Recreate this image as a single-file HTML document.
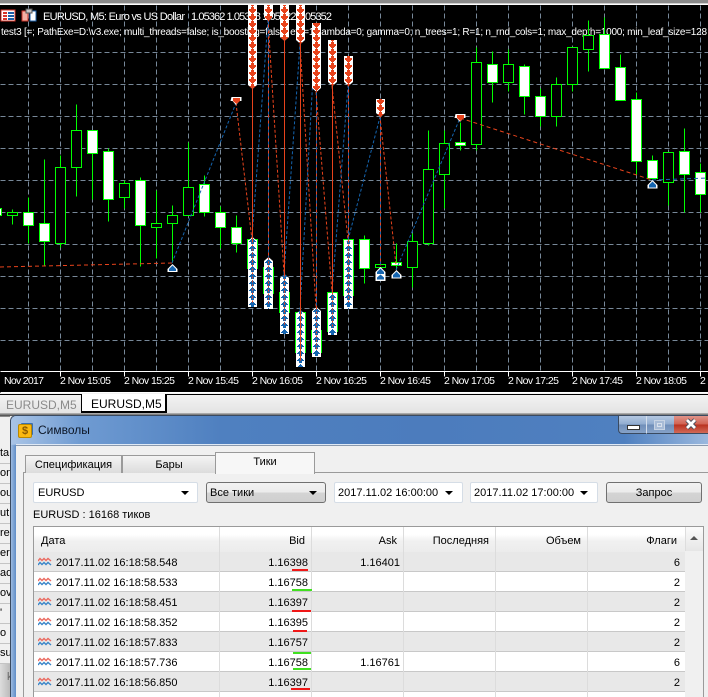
<!DOCTYPE html>
<html><head><meta charset="utf-8">
<style>
html,body{margin:0;padding:0;background:#f0f0f0}
body{position:relative;width:708px;height:697px;overflow:hidden;font:11px "Liberation Sans","Noto Sans CJK SC",sans-serif;color:#000}
.a{position:absolute;white-space:nowrap}
.c{position:absolute;top:482px;height:19px;background:#fff;border:1px solid #d5dde6;border-radius:2px;line-height:19px;font-size:11px}
.c span{position:absolute;left:3px;top:1px}
.c i{position:absolute;right:8px;top:8px;width:0;height:0;border:4px solid transparent;border-top:4px solid #000;border-bottom:0}
.g{background:linear-gradient(#f2f2f2 0,#ebebeb 50%,#d4d4d4 51%,#cfcfcf 100%);border:1px solid #707070}
.r{position:absolute;left:34px;width:651px;height:19px;border-bottom:1px solid #c8c8c8}
.r.o{background:#e8e8e8}.r.w{background:#fff}
.r b{font-weight:normal;position:absolute;top:4px;line-height:14px}
.r svg{position:absolute;left:4px;top:5px}
.r svg path{stroke-width:1.4}
.v{position:absolute;top:527px;width:1px;height:170px;background:#dcdcdc}
.h{position:absolute;top:535px;line-height:13px}
.u{position:absolute;height:2px}
.s{position:absolute;left:0;width:10px;height:19px;border-bottom:1px solid #c4c4c4;overflow:hidden;line-height:19px;background:#f0f0f0;font-size:11px}
.t{position:absolute;text-align:center;line-height:17px;font-size:11px}
</style></head><body>

<svg class="a" style="left:0;top:0" width="708" height="393" viewBox="0 0 708 393" font-family="Liberation Sans, sans-serif">
<defs>
<pattern id="rp" patternUnits="userSpaceOnUse" width="16" height="7"><g fill="#e8431c" shape-rendering="crispEdges"><rect x="11" y="0" width="3" height="2"/><rect x="9" y="2" width="7" height="2"/><rect x="10" y="4" width="5" height="1"/><rect x="11" y="5" width="3" height="1"/><rect x="12" y="6" width="1" height="1"/></g></pattern>
<pattern id="bp" patternUnits="userSpaceOnUse" width="16" height="7"><g fill="#1565b0" shape-rendering="crispEdges"><rect x="12" y="0" width="1" height="1"/><rect x="11" y="1" width="3" height="1"/><rect x="10" y="2" width="5" height="1"/><rect x="9" y="3" width="7" height="1"/><rect x="11" y="4" width="3" height="2"/></g></pattern>
<path id="tops" d="M248 5h9v80l-4.500 4-4.500-4zM264 5h9v12l-4.500 4-4.500-4zM280 5h9v32l-4.500 4-4.500-4zM296 5h9v35l-4.500 4-4.500-4zM312 23h9v65l-4.500 4-4.500-4zM328 40h9v42l-4.500 4-4.500-4zM344 56h9v26l-4.500 4-4.500-4zM376 99h9v14l-4.500 4-4.500-4z"/>
<path id="bots" d="M252.500 237l4.500 4v66h-9v-66zM268.500 257l4.500 4v48h-9v-48zM284.500 274l4.500 4v56h-9v-56zM300.500 310l4.500 4v53h-9v-53zM316.500 307l4.500 4v46h-9v-46zM332.500 292l4.500 4v39h-9v-39zM348.500 240l4.500 4v65h-9v-65z"/>
</defs>
<rect width="708" height="393" fill="#000"/>
<rect width="708" height="3" fill="#8a8a8a"/>
<rect y="3" width="708" height="1" fill="#d0d0d0"/>
<rect y="4" width="708" height="1" fill="#fff"/>
<g transform="translate(.5,.5)">
<path fill="none" stroke="#778899" stroke-dasharray="5 3" d="M0 52H708M0 84H708M0 116H708M0 148H708M0 180H708M0 212H708M0 244H708M0 276H708M0 308H708M0 340H708M28 5V371M60 5V371M92 5V371M124 5V371M156 5V371M188 5V371M220 5V371M252 5V371M284 5V371M316 5V371M348 5V371M380 5V371M412 5V371M444 5V371M476 5V371M508 5V371M540 5V371M572 5V371M604 5V371M636 5V371M668 5V371M700 5V371"/>
<path fill="none" stroke="#fff" d="M0 371H708M60 371V376M124 371V376M188 371V376M252 371V376M316 371V376M380 371V376M444 371V376M508 371V376M572 371V376M636 371V376M700 371V376M0 392H708"/>
</g>
<text x="43" y="20" fill="#fff" font-size="11" textLength="142">EURUSD, M5: Euro vs US Dollar</text>
<text x="191" y="20" fill="#fff" font-size="11" textLength="141">1.05362 1.05378 1.05322 1.05352</text>
<text x="1" y="35" fill="#fff" font-size="10" textLength="706">test3 [=; PathExe=D:\v3.exe; multi_threads=false; is_boosting=false; eta=1; lambda=0; gamma=0; n_trees=1; R=1; n_rnd_cols=1; max_depth=1000; min_leaf_size=128</text>
<g fill="#fff" font-size="10.500">
<text x="4" y="384" textLength="40">Nov 2017</text>
<text x="60" y="384" textLength="51">2 Nov 15:05</text><text x="124" y="384" textLength="51">2 Nov 15:25</text><text x="188" y="384" textLength="51">2 Nov 15:45</text><text x="252" y="384" textLength="51">2 Nov 16:05</text><text x="316" y="384" textLength="51">2 Nov 16:25</text><text x="380" y="384" textLength="51">2 Nov 16:45</text><text x="444" y="384" textLength="51">2 Nov 17:05</text><text x="508" y="384" textLength="51">2 Nov 17:25</text><text x="572" y="384" textLength="51">2 Nov 17:45</text><text x="636" y="384" textLength="51">2 Nov 18:05</text><text x="700" y="384">2</text>
</g>
<!-- title icons -->
<g shape-rendering="crispEdges">
<rect x="1" y="10" width="14" height="11" fill="#fff" stroke="#d8352a"/><rect x="3" y="12" width="4" height="2" fill="#d8352a"/><rect x="3" y="15" width="4" height="2" fill="#d8352a"/><rect x="3" y="18" width="4" height="2" fill="#d8352a"/><rect x="8" y="12" width="6" height="2" fill="#1d5fa8"/><rect x="8" y="15" width="6" height="2" fill="#1d5fa8"/><rect x="8" y="18" width="6" height="2" fill="#1d5fa8"/>
<rect x="22" y="11" width="6" height="10" fill="#f3b0a4" stroke="#c8352a"/><rect x="30" y="11" width="6" height="10" fill="#fff" stroke="#1d5fa8"/><rect x="26" y="9" width="6" height="4" fill="#c8c8c8" stroke="#555"/>
</g>
<g transform="translate(.5,.5)" shape-rendering="crispEdges">
<path fill="none" stroke="#0f0" d="M12 209V224M28 197V243M44 159V266M60 155V247M76 104V196M92 130V199M108 148V221M124 180V208M140 177V266M156 190V258M172 205V262M188 142V215M204 175V216M220 206V248M236 215V252M364 235V283M396 243V269M412 233V287M428 130V245M444 130V208M460 122V150M476 47V150M492 51V102M508 49V91M524 64V114M540 88V126M556 77V126M572 47V91M588 20V71M604 17V68M620 54V100M636 92V174M652 155V178M668 152V205M684 128V212M700 163V212"/>
<path fill="#fff" stroke="#0f0" d="M23 212h10v13h-10zM39 223h10v18h-10zM87 130h10v23h-10zM103 151h10v48h-10zM135 180h10v45h-10zM199 184h10v28h-10zM215 212h10v15h-10zM231 227h10v16h-10zM359 239h10v29h-10zM391 262h10v3h-10zM455 142h10v3h-10zM487 64h10v18h-10zM519 66h10v30h-10zM535 96h10v20h-10zM599 34h10v34h-10zM615 67h10v33h-10zM631 99h10v62h-10zM647 160h10v18h-10zM679 151h10v23h-10zM695 172h10v22h-10zM-9 208h10v7h-10zM247 239h10v29h-10zM263 267h10v26h-10zM279 292h10v20h-10zM295 312h10v40h-10zM311 330h10v22h-10zM327 292h10v39h-10zM343 239h10v56h-10z"/>
<path fill="#000" stroke="#0f0" d="M7 212h10v3h-10zM55 167h10v76h-10zM71 130h10v37h-10zM119 183h10v14h-10zM151 223h10v4h-10zM167 215h10v8h-10zM183 187h10v28h-10zM375 264h10v3h-10zM407 241h10v26h-10zM423 169h10v74h-10zM439 143h10v31h-10zM471 62h10v82h-10zM503 64h10v18h-10zM551 84h10v32h-10zM567 47h10v37h-10zM583 35h10v14h-10zM663 152h10v30h-10z"/>
</g>
<!-- trend dashes -->
<g fill="none" stroke-dasharray="3 2" stroke-width="1">
<path stroke="#e8431c" stroke-dasharray="4 3" d="M0 267L172 263M460 118L652 180"/>
<path stroke="#e8431c" d="M236 103L252 240M268 20L284 274M300 44L316 307M316 92L332 292M332 86L348 240M380 117L396 265"/>
<path stroke="#1565b0" d="M172 263L236 103M252 237L268 20M284 274L300 44M300 310L316 23M332 292L348 86M348 240L380 117M396 270L460 118"/>
<path stroke="#1565b0" stroke-dasharray="4 3" d="M652 180L708 178"/>
</g>
<use href="#tops" fill="#fff"/><use href="#tops" fill="url(#rp)"/>
<use href="#bots" fill="#fff"/><use href="#bots" fill="url(#bp)"/>
<!-- single sell arrows -->
<path fill="#fff" d="M231.500 97h10v4h-2l-3 3.500h-1l-3-3.500h-2z"/><path fill="#e8431c" d="M233 98h7v3l-3.500 3-3.500-3z"/>
<path fill="#fff" d="M455.500 114h10v4h-2l-3 3.500h-1l-3-3.500h-2z"/><path fill="#e8431c" d="M457 115h7v3l-3.500 3-3.500-3z"/>
<!-- single buy arrows -->
<path id="b1" fill="#fff" d="M172.500 264l5 5v3h-10v-3z"/><path fill="#1565b0" d="M172.500 265.500l3.500 3.500v2h-7v-2z"/>
<path fill="#fff" d="M396.500 270l5 5v3.500h-10v-3.500z"/><path fill="#1565b0" d="M396.500 271.500l3.500 3.500v2.500h-7v-2.500z"/>
<path fill="#fff" d="M652.500 180l5 5v3.500h-10v-3.500z"/><path fill="#1565b0" d="M652.500 181.500l3.500 3.500v2.500h-7v-2.500z"/>
<path fill="#fff" d="M380.500 267l5 5v9h-10v-9z"/><path fill="#1565b0" d="M380.500 268.500l3.500 3.500v2h-7v-2zM380.500 274.500l3.500 3v2h-7v-2z"/>
<g transform="translate(.5,.5)" fill="none" shape-rendering="crispEdges">
<path stroke="#e8431c" d="M252 5V240M268 5V257M284 5V274M300 5V360M316 23V307M332 40V292M348 56V240M380 99V265"/>
<path stroke="#1565b0" stroke-dasharray="3 3" d="M268 21V257M316 92V307M380 117V265M348 86V240"/>
<path stroke="#e8431c" stroke-dasharray="2 2" d="M252 240V302M268 257V304M284 274V325M316 307V350M332 292V328M348 240V302"/>
</g>
</svg>

<!-- tab bar -->
<div class="a" style="left:0;top:393px;width:708px;height:22px;background:linear-gradient(#f4f4f4,#e2e2e2)"></div>
<div class="a" style="left:0;top:394px;width:708px;height:1px;background:#000"></div>
<div class="a" style="left:6px;top:398px;font-size:12px;line-height:14px;color:#8a8a8a">EURUSD,M5</div>
<div class="a" style="left:81px;top:394px;width:83px;height:17px;background:#fff;border:1px solid #000;border-top:0;border-width:0 2px 2px 1px"></div>
<div class="a" style="left:91px;top:397px;font-size:12px;line-height:14px">EURUSD,M5</div>
<div class="a" style="left:0;top:413px;width:708px;height:3px;background:linear-gradient(#bdbdbd,#444)"></div>

<!-- left list strip -->
<div class="a" style="left:0;top:416px;width:10px;height:281px;background:#f0f0f0"></div>
<div class="a" style="left:0;top:416px;width:10px;height:1px;background:#888"></div>
<div class="s" style="top:444px">ta</div><div class="s" style="top:464px">on</div><div class="s" style="top:484px">ou</div><div class="s" style="top:504px">ut</div><div class="s" style="top:524px">re</div><div class="s" style="top:544px">err</div><div class="s" style="top:564px">ad</div><div class="s" style="top:584px">ov</div><div class="s" style="top:604px">' c</div><div class="s" style="top:624px">o</div><div class="s" style="top:644px">su</div>
<div class="a" style="left:0;top:664px;width:10px;height:33px;background:linear-gradient(90deg,#ddd,#bbb);color:#666;line-height:26px;padding-left:7px;box-sizing:border-box">k</div>

<!-- window frame -->
<div class="a" style="left:10px;top:415px;width:698px;height:282px;background:linear-gradient(90deg,#a8c4e6 0,#88aad8 8px,#a3bfe2 100%);border:1px solid #3a4a60;border-right:0;border-bottom:0;border-radius:6px 0 0 0;box-sizing:border-box"></div>
<div class="a" style="left:11px;top:416px;width:697px;height:28px;border-radius:5px 0 0 0;background:linear-gradient(90deg,#a9c4e6 0,#6f9bd2 10%,#4f80c0 30%,#4c7cbd 60%,#4f80c0 88%,#9ab8de 100%)"></div>
<div class="a" style="left:16px;top:444px;width:692px;height:1px;background:#dfe9f5"></div>
<div class="a" style="left:11px;top:445px;width:5px;height:252px;background:linear-gradient(90deg,#9dbbe0,#5f8dc8)"></div>
<div class="a" style="left:16px;top:445px;width:692px;height:252px;background:#f0f0f0;border-top:1px solid #8a99ad;box-sizing:border-box"></div>

<!-- title icon -->
<div class="a" style="left:18px;top:424px;width:12px;height:12px;background:#fbb911;border:1px solid #b98800;border-radius:2px;box-shadow:2px -2px 0 -1px #3a6fb0;color:#8a5a00;font-size:11px;line-height:12px;text-align:center;font-weight:bold">$</div>
<div class="a" style="left:38px;top:423px;font-size:12px;line-height:15px;color:#0c1626">Символы</div>

<!-- window buttons -->
<div class="a" style="left:618px;top:416px;width:29px;height:18px;background:linear-gradient(#b4c8e2,#90abcf 50%,#6f8eb8 51%,#86a2c8);border:1px solid #3a4a60;border-top:0;border-right-color:#d4deec;border-radius:0 0 0 4px;box-sizing:border-box"></div>
<div class="a" style="left:627px;top:425px;width:11px;height:3px;background:#fff;border:1px solid #333"></div>
<div class="a" style="left:647px;top:416px;width:27px;height:18px;background:linear-gradient(#b4c8e2,#90abcf 50%,#6f8eb8 51%,#86a2c8);border-bottom:1px solid #3a4a60;box-sizing:border-box"></div>
<div class="a" style="left:654px;top:420px;width:9px;height:8px;border:1px solid #c8d4e4;background:#a7bbd6;box-shadow:inset 0 0 0 2px #a7bbd6,inset 0 0 0 3px #d7e0ec"></div>
<div class="a" style="left:674px;top:416px;width:34px;height:18px;background:linear-gradient(#e0948a,#d0604f 50%,#b8301e 51%,#d26a58);border-bottom:1px solid #3a4a60;box-sizing:border-box"></div>
<svg class="a" style="left:684px;top:418px" width="14" height="12"><path d="M3 2L11 10M11 2L3 10" stroke="#404858" stroke-width="4.500"/><path d="M3 2L11 10M11 2L3 10" stroke="#fff" stroke-width="2.800"/></svg>

<!-- property tabs -->
<div class="a" style="left:23px;top:472px;width:685px;height:225px;background:#f0f0f0;border:1px solid #9a9a9a;border-right:0;border-bottom:0;box-sizing:border-box"></div>
<div class="t" style="left:25px;top:455px;width:95px;height:17px;background:linear-gradient(#f4f4f4,#dcdcdc);border:1px solid #9a9a9a;border-bottom:0;line-height:18px">Спецификация</div>
<div class="t" style="left:122px;top:455px;width:92px;height:17px;background:linear-gradient(#f4f4f4,#dcdcdc);border:1px solid #9a9a9a;border-bottom:0;line-height:18px">Бары</div>
<div class="t" style="left:215px;top:452px;width:98px;height:21px;background:#f7f7f7;border:1px solid #9a9a9a;border-bottom:0;line-height:19px">Тики</div>

<!-- toolbar -->
<div class="c" style="left:33px;width:163px"><span style="left:4px">EURUSD</span><i></i></div>
<div class="c g" style="left:206px;width:118px;border-radius:3px"><span>Все тики</span><i></i></div>
<div class="c" style="left:334px;width:127px"><span>2017.11.02 16:00:00</span><i style="right:9px"></i></div>
<div class="c" style="left:470px;width:126px"><span>2017.11.02 17:00:00</span><i style="right:9px"></i></div>
<div class="c g" style="left:606px;width:94px;border-radius:3px;text-align:center;line-height:21px">Запрос</div>
<div class="a" style="left:33px;top:509px;font-size:11px;line-height:13px">EURUSD : 16168 тиков</div>

<!-- table -->
<div class="a" style="left:33px;top:526px;width:671px;height:171px;background:#fff;border:1px solid #9a9a9a;border-bottom:0;box-sizing:border-box"></div>
<div class="a" style="left:34px;top:527px;width:651px;height:25px;background:linear-gradient(#fff 0,#fff 30%,#f1f1f1 55%,#ececec 100%)"></div>
<div class="a" style="left:685px;top:527px;width:18px;height:170px;background:#f0f0f0"></div>
<div class="a" style="left:685px;top:527px;width:18px;height:24px;background:linear-gradient(#fbfbfb,#e6e6e6);border-left:1px solid #ddd;box-sizing:border-box"></div>
<div class="a" style="left:690px;top:536px;width:0;height:0;border:4px solid transparent;border-bottom:4px solid #555;border-top:0"></div>

<div class="h" style="left:41px">Дата</div>
<div class="h" style="right:403px">Bid</div>
<div class="h" style="right:311px">Ask</div>
<div class="h" style="right:219px">Последняя</div>
<div class="h" style="right:127px">Объем</div>
<div class="h" style="right:31px">Флаги</div>

<div class="r o" style="top:552px"><svg width="14" height="10"><path d="M0 4L2 1.500 4 3.500 6 1.500 8 3.500 10 1.500 13 4" fill="none" stroke="#ea6a60"/><path d="M0 8L2 5.500 4 7.500 6 5.500 8 7.500 10 5.500 13 8" fill="none" stroke="#3a85c8"/></svg><b style="left:22px">2017.11.02 16:18:58.548</b><b style="right:377px">1.16398</b><b style="right:285px">1.16401</b><b style="right:5px">6</b></div>
<div class="r w" style="top:572px"><svg width="14" height="10"><path d="M0 4L2 1.500 4 3.500 6 1.500 8 3.500 10 1.500 13 4" fill="none" stroke="#ea6a60"/><path d="M0 8L2 5.500 4 7.500 6 5.500 8 7.500 10 5.500 13 8" fill="none" stroke="#3a85c8"/></svg><b style="left:22px">2017.11.02 16:18:58.533</b><b style="right:377px">1.16758</b><b style="right:5px">2</b></div>
<div class="r o" style="top:592px"><svg width="14" height="10"><path d="M0 4L2 1.500 4 3.500 6 1.500 8 3.500 10 1.500 13 4" fill="none" stroke="#ea6a60"/><path d="M0 8L2 5.500 4 7.500 6 5.500 8 7.500 10 5.500 13 8" fill="none" stroke="#3a85c8"/></svg><b style="left:22px">2017.11.02 16:18:58.451</b><b style="right:377px">1.16397</b><b style="right:5px">2</b></div>
<div class="r w" style="top:612px"><svg width="14" height="10"><path d="M0 4L2 1.500 4 3.500 6 1.500 8 3.500 10 1.500 13 4" fill="none" stroke="#ea6a60"/><path d="M0 8L2 5.500 4 7.500 6 5.500 8 7.500 10 5.500 13 8" fill="none" stroke="#3a85c8"/></svg><b style="left:22px">2017.11.02 16:18:58.352</b><b style="right:377px">1.16395</b><b style="right:5px">2</b></div>
<div class="r o" style="top:632px"><svg width="14" height="10"><path d="M0 4L2 1.500 4 3.500 6 1.500 8 3.500 10 1.500 13 4" fill="none" stroke="#ea6a60"/><path d="M0 8L2 5.500 4 7.500 6 5.500 8 7.500 10 5.500 13 8" fill="none" stroke="#3a85c8"/></svg><b style="left:22px">2017.11.02 16:18:57.833</b><b style="right:377px">1.16757</b><b style="right:5px">2</b></div>
<div class="r w" style="top:652px"><svg width="14" height="10"><path d="M0 4L2 1.500 4 3.500 6 1.500 8 3.500 10 1.500 13 4" fill="none" stroke="#ea6a60"/><path d="M0 8L2 5.500 4 7.500 6 5.500 8 7.500 10 5.500 13 8" fill="none" stroke="#3a85c8"/></svg><b style="left:22px">2017.11.02 16:18:57.736</b><b style="right:377px">1.16758</b><b style="right:285px">1.16761</b><b style="right:5px">6</b></div>
<div class="r o" style="top:672px"><svg width="14" height="10"><path d="M0 4L2 1.500 4 3.500 6 1.500 8 3.500 10 1.500 13 4" fill="none" stroke="#ea6a60"/><path d="M0 8L2 5.500 4 7.500 6 5.500 8 7.500 10 5.500 13 8" fill="none" stroke="#3a85c8"/></svg><b style="left:22px">2017.11.02 16:18:56.850</b><b style="right:377px">1.16397</b><b style="right:5px">2</b></div>

<div class="v" style="left:219px"></div><div class="v" style="left:311px"></div><div class="v" style="left:403px"></div><div class="v" style="left:495px"></div><div class="v" style="left:587px"></div>

<div class="u" style="left:292px;top:569px;width:16px;background:#f01818"></div>
<div class="u" style="left:292px;top:589px;width:20px;background:#40e020"></div>
<div class="u" style="left:292px;top:610px;width:19px;background:#f01818"></div>
<div class="u" style="left:293px;top:630px;width:14px;background:#f01818"></div>
<div class="u" style="left:293px;top:652px;width:18px;background:#40e020"></div>
<div class="u" style="left:293px;top:668px;width:18px;background:#40e020"></div>
<div class="u" style="left:291px;top:688px;width:19px;background:#f01818"></div>
</body></html>
